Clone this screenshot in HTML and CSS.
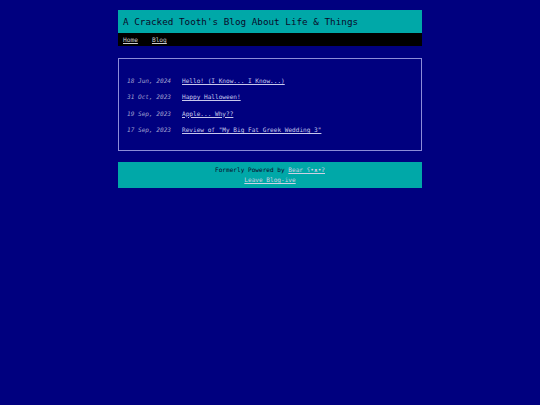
FILE: index.html
```html
<!DOCTYPE html>
<html>
<head>
<meta charset="utf-8">
<link rel="stylesheet" href="styles.css">
</head>
<body>
<div class="page">
  <header class="header">
    <div class="title">A Cracked Tooth's Blog About Life &amp; Things</div>
    <nav class="nav"><a href="#">Home</a><a href="#">Blog</a></nav>
  </header>
  <main class="main">
    <ul class="posts">
      <li><span class="date">18 Jun, 2024</span><a href="#">Hello! (I Know... I Know...)</a></li>
      <li><span class="date">31 Oct, 2023</span><a href="#">Happy Halloween!</a></li>
      <li><span class="date">19 Sep, 2023</span><a href="#">Apple... Why??</a></li>
      <li><span class="date">17 Sep, 2023</span><a href="#">Review of "My Big Fat Greek Wedding 3"</a></li>
    </ul>
  </main>
  <footer class="footer">
    <div>Formerly Powered by <a href="#">Bear ʕ•ᴥ•ʔ</a></div>
    <div><a href="#">Leave Blog-ive</a></div>
  </footer>
</div>
</body>
</html>
```
FILE: styles.css
```css
html, body {
  margin: 0;
  padding: 0;
  background: #00007f;
  font-family: "DejaVu Sans Mono", "Liberation Mono", monospace;
}
.page {
  width: 304px;
  margin: 0 auto;
  padding-top: 10px;
}
.header {
  background: #00a8a8;
}
.title {
  font-size: 9.3px;
  color: #0a0a2a;
  padding: 5px 5px 4px 5px;
  line-height: 14px;
}
.nav {
  background: #000000;
  display: flex;
  gap: 14px;
  padding: 0 5px;
  height: 13px;
  align-items: center;
  font-size: 6.2px;
}
.nav a {
  color: #cccccc;
}
.main {
  margin-top: 12px;
  border: 1px solid #8c8cd8;
  padding: 18px 8px 17px 8px;
}
.posts {
  list-style: none;
  margin: 0;
  padding: 0;
  font-size: 6.1px;
  display: flex;
  flex-direction: column;
  gap: 9px;
}
.posts li {
  display: flex;
  line-height: 7.3px;
}
.date {
  width: 55px;
  font-style: italic;
  color: #a0a0d0;
}
.posts a {
  color: #c8c8ec;
}
.footer {
  margin-top: 11px;
  background: #00a8a8;
  text-align: center;
  font-size: 6.1px;
  color: #0a0a2a;
  padding: 3px 0 3px;
  line-height: 10px;
}
.footer a {
  color: #d0d0e4;
}
```
